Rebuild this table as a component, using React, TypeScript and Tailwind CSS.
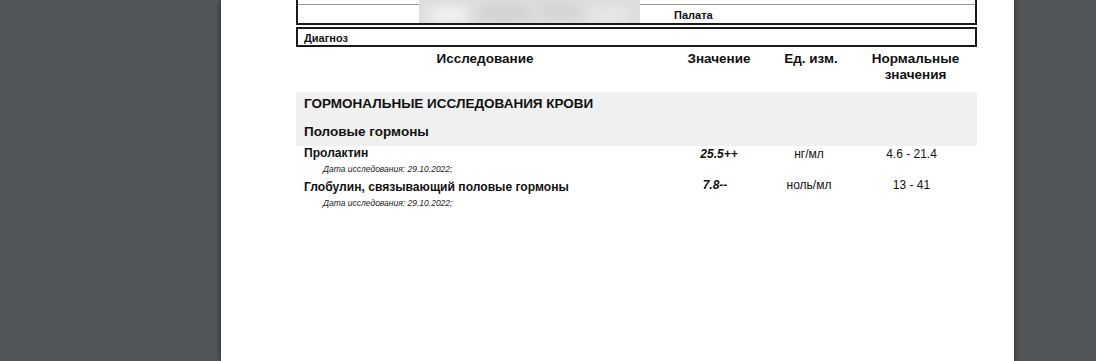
const font = { fontFamily: '"Liberation Sans", Arial, sans-serif' }

type Row = {
  name: string
  date: string
  value: string
  unit: string
  norm: string
}

const rows: Row[] = [
  { name: 'Пролактин', date: '29.10.2022', value: '25.5++', unit: 'нг/мл', norm: '4.6 - 21.4' },
  { name: 'Глобулин, связывающий половые гормоны', date: '29.10.2022', value: '7.8--', unit: 'ноль/мл', norm: '13 - 41' },
]

function ResultRow({ row, first }: { row: Row; first: boolean }) {
  return (
    <div className={`grid grid-cols-[374px_98px_86px_123px] ${first ? '' : 'mt-[6px]'}`}>
      <div className="pl-[8px]">
        <div className="text-[12.1px] leading-[14px] font-bold text-[#111]">{row.name}</div>
        <div className="pl-[19px] mt-[4px] text-[8.5px] leading-[10px] italic text-[#222]">
          Дата исследования: {row.date};
        </div>
      </div>
      <div className={`text-center text-[12px] leading-[14px] font-bold italic text-[#111] ${first ? 'mt-[1px]' : '-mt-[2px] pr-[8px]'}`}>
        {row.value}
      </div>
      <div className={`text-center text-[12px] leading-[14px] text-[#111] pr-[4px] ${first ? 'mt-[1px]' : '-mt-[2px]'}`}>
        {row.unit}
      </div>
      <div className={`text-center text-[12px] leading-[14px] text-[#111] pr-[8px] ${first ? 'mt-[1px]' : '-mt-[2px]'}`}>
        {row.norm}
      </div>
    </div>
  )
}

export default function App() {
  return (
    <div className="h-[361px] overflow-hidden bg-[#525659] pl-[221px]" style={font}>
      <div className="w-[793px] h-full bg-white pl-[75px] shadow-[0_0_6px_rgba(0,0,0,0.55)]">
        <div className="w-[681px]">
          {/* Patient box (cut at top) */}
          <div className="relative border-2 border-t-0 border-[#1a1a1a]">
            <div className="h-[5px] border-b border-[#999]" />
            <div className="h-[18px] flex items-center pt-[2px] pl-[376px] text-[11px] font-bold text-[#111]">
              Палата
            </div>
            <div className="absolute left-[121px] top-0 w-[221px] h-[23px] overflow-hidden bg-[#dedede]">
              <div className="absolute left-[10px] top-[8px] w-[40px] h-[14px] rounded-full bg-[#f4f4f4] blur-[6px]" />
              <div className="absolute left-[60px] top-[6px] w-[50px] h-[14px] rounded-full bg-[#cfcfcf] blur-[6px]" />
              <div className="absolute left-[120px] top-[4px] w-[40px] h-[14px] rounded-full bg-[#d2d2d2] blur-[6px]" />
              <div className="absolute left-[170px] top-[8px] w-[40px] h-[14px] rounded-full bg-[#e8e8e8] blur-[6px]" />
            </div>
          </div>

          {/* Diagnosis */}
          <div className="mt-[2px] h-[20px] border-2 border-[#1a1a1a] flex items-center pt-[2px] pl-[6px] text-[11px] font-bold text-[#111]">
            Диагноз
          </div>

          {/* Header */}
          <div className="grid grid-cols-[374px_98px_86px_123px] pt-[4px] text-[13.5px] leading-[16px] font-bold text-[#111]">
            <div className="text-center pl-[4px]">Исследование</div>
            <div className="text-center">Значение</div>
            <div className="text-center">Ед. изм.</div>
            <div className="text-center">
              Нормальные
              <br />
              значения
            </div>
          </div>

          {/* Section */}
          <div className="mt-[9px] bg-[#f0f0f0] pl-[8px] pt-[4px] pb-[6px] text-[13.5px] leading-[16px] font-bold text-[#111]">
            <div>ГОРМОНАЛЬНЫЕ ИССЛЕДОВАНИЯ КРОВИ</div>
            <div className="mt-[12px]">Половые гормоны</div>
          </div>

          {rows.map((r, i) => (
            <ResultRow key={r.name} row={r} first={i === 0} />
          ))}
        </div>
      </div>
    </div>
  )
}
